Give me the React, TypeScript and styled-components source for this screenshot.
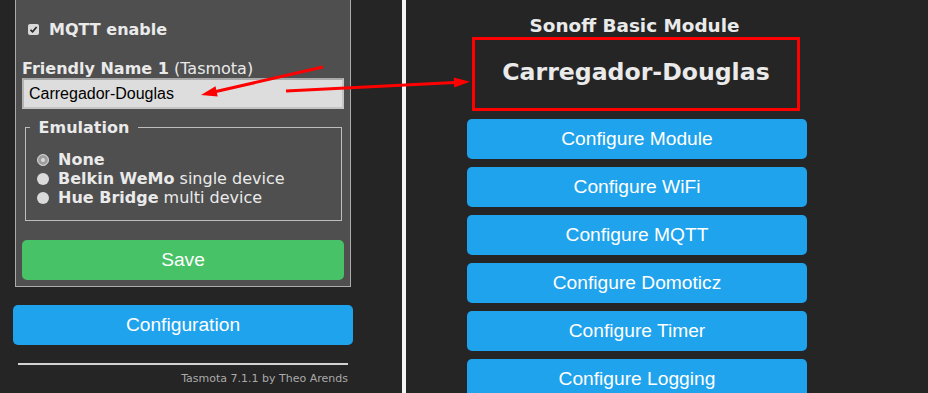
import React from "react";
import styled, { createGlobalStyle } from "styled-components";

const GlobalStyle = createGlobalStyle`
  html, body { margin: 0; padding: 0; background: #252525; overflow: hidden; }
  * { box-sizing: border-box; }
`;

const Page = styled.div`
  position: relative;
  display: flex;
  width: 928px;
  height: 393px;
  overflow: hidden;
  background: #252525;
  color: #eaeaea;
  font-family: "DejaVu Sans", Verdana, sans-serif;
`;

const LeftPane = styled.div`
  width: 402px;
  padding-left: 13px;
  display: flex;
  flex-direction: column;
`;

const Divider = styled.div`
  width: 4px;
  background: #f4f4f4;
`;

const RightPane = styled.div`
  flex: 1;
  padding-left: 61px;
  display: flex;
  flex-direction: column;
`;

const Column = styled.div`
  width: 340px;
  display: flex;
  flex-direction: column;
`;

const Panel = styled.div`
  margin: 0 2px;
  background: #4f4f4f;
  border: 1px solid #ababab;
  border-top: none;
  padding: 20px 6px 6px;
  display: flex;
  flex-direction: column;
`;

const CheckRow = styled.div`
  display: flex;
  align-items: center;
  gap: 10px;
  padding-left: 6px;
  font-size: 16px;
  line-height: 19px;
  font-weight: bold;
`;

const CheckBox = styled.span`
  width: 11px;
  height: 11px;
  border-radius: 2px;
  background: #d9d9d9;
  display: flex;
  align-items: center;
  justify-content: center;
`;

const FieldLabel = styled.div`
  margin-top: 20px;
  font-size: 16px;
  line-height: 19px;
`;

const TextInput = styled.input`
  width: 100%;
  height: 31px;
  padding: 4px 5px;
  font-family: "Liberation Sans", Arial, sans-serif;
  font-size: 16px;
  color: #000;
  background: #dddddd;
  border: 2px solid #c4c4c4;
  border-top-color: #a9a9a9;
  border-left-color: #b4b4b4;
  outline: none;
`;

const SubFieldset = styled.fieldset`
  margin: 9px 2px 0 3px;
  padding: 13px 0 13px 0;
  border: 1px solid #bdbdbd;
  min-inline-size: 0;
`;

const Legend = styled.legend`
  margin-left: 4px;
  padding: 0 3px;
  font-size: 16px;
  line-height: 19px;
  font-weight: bold;
  color: #eaeaea;
`;

const RadioRow = styled.div`
  display: flex;
  align-items: center;
  gap: 9px;
  padding-left: 11px;
  font-size: 16px;
  line-height: 19px;
`;

const RadioDot = styled.span<{ $checked?: boolean }>`
  width: 12px;
  height: 12px;
  border-radius: 50%;
  background: #dadada;
  box-shadow: ${(p) => (p.$checked ? "inset 0 0 0 3px #9e9e9e" : "none")};
  border: ${(p) => (p.$checked ? "1px solid #cfcfcf" : "none")};
`;

const ActionButton = styled.button<{ $tone?: "green" | "blue"; $gap?: number }>`
  display: block;
  width: 100%;
  height: 40px;
  margin-top: ${(p) => p.$gap ?? 8}px;
  border: 0;
  border-radius: 5px;
  background: ${(p) => (p.$tone === "green" ? "#47c266" : "#1fa3ec")};
  color: #fff;
  font-family: "Liberation Sans", Arial, sans-serif;
  font-size: 19.2px;
  line-height: 40px;
  padding: 0;
  cursor: pointer;
`;

const Rule = styled.hr`
  margin: 18px 5px 0;
  height: 0;
  border: 0;
  border-top: 2px solid #d2d2d2;
`;

const Footer = styled.div`
  margin: 7px 5px 0;
  text-align: right;
  font-size: 11px;
  line-height: 13px;
  color: #aaaaaa;
`;

const Title = styled.div`
  padding: 15px 5px 0 0;
  text-align: center;
  font-weight: bold;
  font-size: 18.4px;
  line-height: 22px;
`;

const Highlight = styled.div`
  margin: 0 7px 0 5px;
  height: 74px;
  border: 3px solid #ff0000;
  display: flex;
  align-items: center;
  justify-content: center;
  padding-bottom: 4px;
`;

const DeviceName = styled.h2`
  margin: 0;
  font-size: 23.6px;
  line-height: 28px;
  font-weight: bold;
  color: #eaeaea;
`;

const Overlay = styled.svg`
  position: absolute;
  left: 0;
  top: 0;
  pointer-events: none;
`;

const configButtons = [
  "Configure Module",
  "Configure WiFi",
  "Configure MQTT",
  "Configure Domoticz",
  "Configure Timer",
  "Configure Logging",
];

export default function App() {
  return (
    <>
      <GlobalStyle />
      <Page>
        <LeftPane>
          <Column>
            <Panel>
              <CheckRow>
                <CheckBox>
                  <svg width="9" height="9" viewBox="0 0 9 9">
                    <path d="M1.5 4.8 L3.6 6.8 L7.6 2" fill="none" stroke="#2a2a2a" strokeWidth="1.8" />
                  </svg>
                </CheckBox>
                MQTT enable
              </CheckRow>
              <FieldLabel>
                <b>Friendly Name 1</b> (Tasmota)
              </FieldLabel>
              <TextInput defaultValue="Carregador-Douglas" />
              <SubFieldset>
                <Legend>{"\u00a0Emulation\u00a0"}</Legend>
                <RadioRow>
                  <RadioDot $checked />
                  <b>None</b>
                </RadioRow>
                <RadioRow>
                  <RadioDot />
                  <span>
                    <b>Belkin WeMo</b> single device
                  </span>
                </RadioRow>
                <RadioRow>
                  <RadioDot />
                  <span>
                    <b>Hue Bridge</b> multi device
                  </span>
                </RadioRow>
              </SubFieldset>
              <ActionButton $tone="green" $gap={19}>Save</ActionButton>
            </Panel>
            <ActionButton $tone="blue" $gap={18}>Configuration</ActionButton>
            <Rule />
            <Footer>Tasmota 7.1.1 by Theo Arends</Footer>
          </Column>
        </LeftPane>
        <Divider />
        <RightPane>
          <Column>
            <Title>Sonoff Basic Module</Title>
            <Highlight>
              <DeviceName>Carregador-Douglas</DeviceName>
            </Highlight>
            {configButtons.map((label) => (
              <ActionButton key={label} $tone="blue">
                {label}
              </ActionButton>
            ))}
          </Column>
        </RightPane>
        <Overlay width="928" height="393" viewBox="0 0 928 393">
          <line x1="323" y1="67" x2="216" y2="91.5" stroke="#ff0000" strokeWidth="3" />
          <polygon points="201,95 217.7,96.5 215.5,86.3" fill="#ff0000" />
          <line x1="286" y1="91" x2="455" y2="82.5" stroke="#ff0000" strokeWidth="3" />
          <polygon points="470,81.7 454.2,87.5 453.8,77.5" fill="#ff0000" />
        </Overlay>
      </Page>
    </>
  );
}
